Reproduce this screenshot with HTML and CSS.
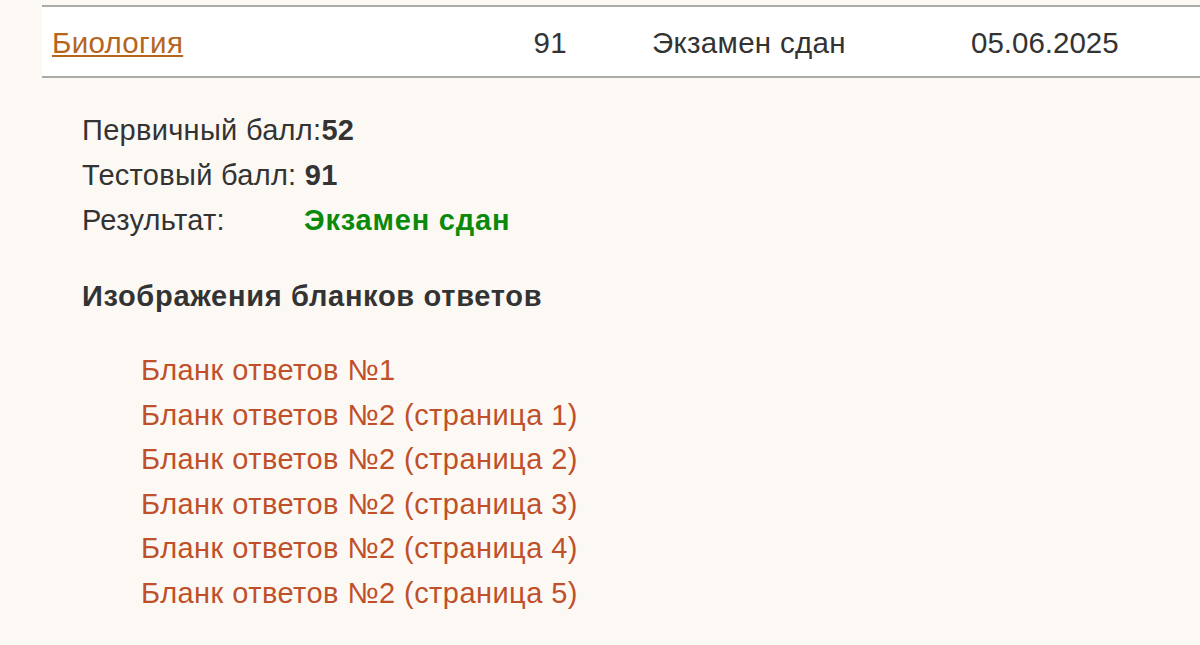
FILE: index.html
```html
<!DOCTYPE html>
<html lang="ru">
<head>
  <meta charset="UTF-8">
  <meta name="viewport" content="width=device-width, initial-scale=1.0">
  <title>Результаты экзаменов</title>
  <link rel="stylesheet" href="styles.css">
</head>
<body>
  <div class="exam-row">
    <a href="#" class="subject">Биология</a>
    <span class="score">91</span>
    <span class="status">Экзамен сдан</span>
    <span class="date">05.06.2025</span>
  </div>

  <div class="details">
    <p>Первичный балл:<strong>52</strong></p>
    <p>Тестовый балл: <strong>91</strong></p>
    <p><span class="label">Результат:</span><strong class="passed">Экзамен сдан</strong></p>

    <h3>Изображения бланков ответов</h3>

    <ul class="blanks">
      <li><a href="#">Бланк ответов №1</a></li>
      <li><a href="#">Бланк ответов №2 (страница 1)</a></li>
      <li><a href="#">Бланк ответов №2 (страница 2)</a></li>
      <li><a href="#">Бланк ответов №2 (страница 3)</a></li>
      <li><a href="#">Бланк ответов №2 (страница 4)</a></li>
      <li><a href="#">Бланк ответов №2 (страница 5)</a></li>
    </ul>
  </div>
</body>
</html>
```

FILE: styles.css
```css
body {
  margin: 0;
  font-family: 'Liberation Sans', Arial, sans-serif;
  font-size: 29px;
  letter-spacing: 0.3px;
  background: #fcf9f5;
  color: #333;
}
.exam-row {
  margin: 5px 0 0 42px;
  height: 66px;
  padding: 3px 0 0 10px;
  background: #fff;
  border-top: 2px solid #aaa;
  border-bottom: 2px solid #aaa;
  display: grid;
  grid-template-columns: 475px 40px 404px 1fr;
  align-items: center;
  font-size: 29.5px;
}
.subject {
  color: #b5651d;
}
.score {
  text-align: right;
}
.status {
  padding-left: 85px;
}
.date {
  letter-spacing: 0;
}
.details {
  padding: 30px 0 0 82px;
}
.details p {
  margin: 0;
  line-height: 45px;
}
.label {
  display: inline-block;
  width: 222px;
}
.passed {
  color: #0a8a0a;
  letter-spacing: 0.8px;
}
.details h3 {
  margin: 31px 0 0;
  font-size: 29px;
  line-height: 45px;
  letter-spacing: 0.7px;
}
.blanks {
  list-style: none;
  margin: 29px 0 0;
  padding-left: 59px;
}
.blanks li {
  line-height: 44.5px;
}
.blanks a {
  color: #c0502a;
  text-decoration: none;
  letter-spacing: 0.45px;
}
```
